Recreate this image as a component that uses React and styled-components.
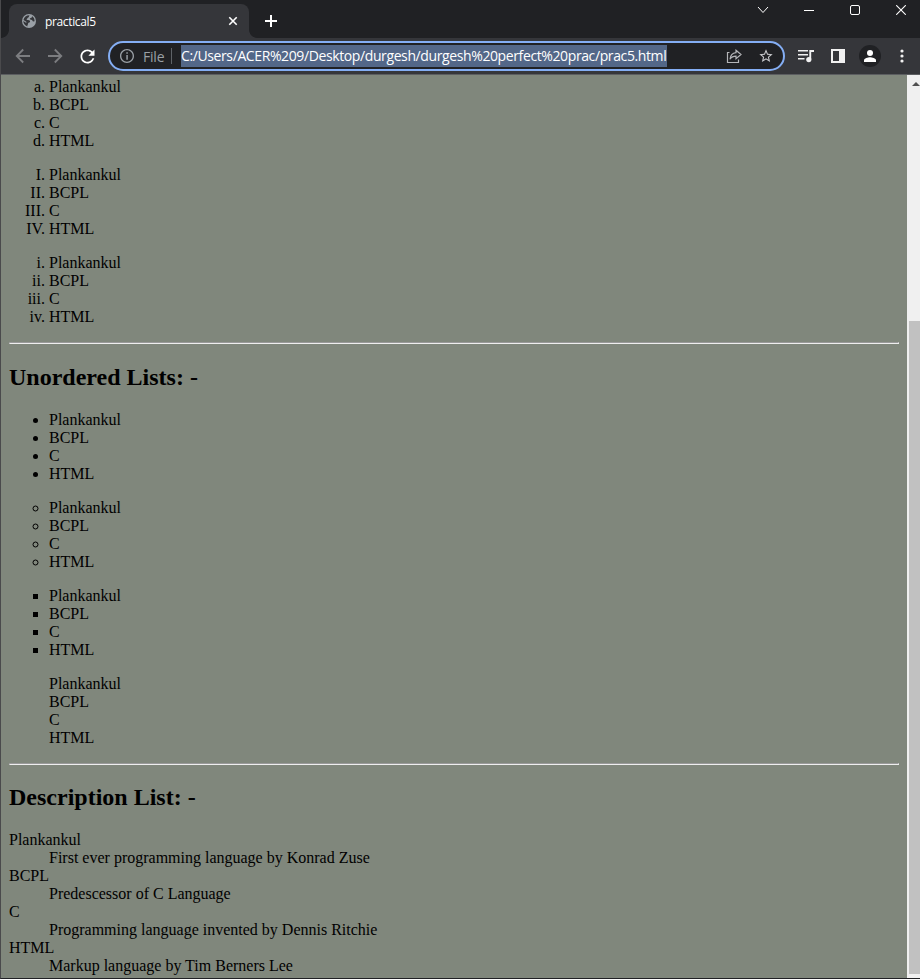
import React from "react";
import styled, { createGlobalStyle } from "styled-components";

const GlobalStyle = createGlobalStyle`
  * { box-sizing: border-box; }
  html, body { margin: 0; padding: 0; overflow: hidden; }
`;

const Window = styled.div`
  width: 920px;
  height: 979px;
  display: flex;
  flex-direction: column;
  background: #202124;
  border-left: 1px solid #4a4a4c;
  border-bottom: 1px solid #202124;
  overflow: hidden;
  font-family: "Open Sans", "Noto Sans", sans-serif;
`;

const TabStrip = styled.div`
  height: 38px;
  flex: none;
  display: flex;
  align-items: flex-start;
  background: #202124;
`;

const TabFoot = styled.div`
  width: 8px;
  height: 8px;
  margin-top: 30px;
  background: radial-gradient(
    circle at ${(p) => (p.$side === "left" ? "0 0" : "100% 0")},
    #202124 7.5px,
    #35363a 8.2px
  );
`;

const Tab = styled.div`
  width: 240px;
  height: 34px;
  margin-top: 4px;
  padding: 0 10px 0 12px;
  display: flex;
  align-items: center;
  background: #35363a;
  border-radius: 8px 8px 0 0;
`;

const TabTitle = styled.span`
  flex: 1;
  margin-left: 8px;
  font-size: 12px;
  letter-spacing: -0.35px;
  color: #fff;
`;

const NewTab = styled.div`
  margin: 13px 0 0 7px;
  display: flex;
`;

const Captions = styled.div`
  margin-left: auto;
  margin-right: -4px;
  display: flex;
`;

const Caption = styled.div`
  width: 46px;
  height: 20px;
  display: flex;
  align-items: center;
  justify-content: center;
`;

const Toolbar = styled.div`
  height: 37px;
  flex: none;
  padding-left: 1px;
  display: flex;
  align-items: center;
  background: #35363a;
  border-bottom: 1px solid #5c5e61;
`;

const NavIcon = styled.div`
  width: 32px;
  display: flex;
  justify-content: center;
  color: ${(p) => (p.$active ? "#fff" : "#7c7d80")};
`;

const Omnibox = styled.div`
  width: 677px;
  height: 30px;
  margin-left: 5px;
  padding: 0 9px 0 9px;
  display: flex;
  align-items: center;
  background: #202124;
  border: 2px solid #84aef4;
  border-radius: 15px;
  color: #9aa0a6;
  font-size: 14px;
  white-space: nowrap;
`;

const Scheme = styled.span`
  margin-left: 8px;
  width: 28px;
  font-size: 14px;
  letter-spacing: -0.2px;
`;

const Divider = styled.span`
  width: 1px;
  height: 16px;
  background: #5f6368;
`;

const Address = styled.span`
  width: 486px;
  height: 22px;
  margin-left: 9px;
  line-height: 21px;
  color: #fff;
  background: #536788;
  letter-spacing: -0.39px;
`;

const OmniActions = styled.div`
  margin-left: auto;
  display: flex;
  gap: 16px;
`;

const ToolIcon = styled.div`
  width: 32px;
  display: flex;
  justify-content: center;
`;

const ToolIcons = styled.div`
  margin-left: ${(p) => p.$gap || 5}px;
  display: flex;
  align-items: center;
`;

const Viewport = styled.div`
  flex: 1;
  min-height: 0;
  display: flex;
`;

const Page = styled.main`
  flex: 1;
  padding: 3px 8px 0;
  background: #80877c;
  color: #000;
  font: 16px/18px "Liberation Serif", "Times New Roman", serif;
  overflow: hidden;
`;

const OrderedList = styled.ol`
  margin: 0 0 16px;
  padding-left: 40px;
  list-style-type: ${(p) => p.$marker};
`;

const BulletList = styled.ul`
  margin: 0 0 16px;
  padding-left: 40px;
  list-style-type: ${(p) => p.$marker};
`;

const Rule = styled.hr`
  height: 2px;
  margin: 0;
  border: 1px solid;
  border-color: #9a9a9a #eee #eee #9a9a9a;
`;

const Heading = styled.h2`
  margin: ${(p) => (p.$tight ? 19 : 20)}px 0 20px;
  font-size: 24px;
  line-height: 27px;
  font-weight: bold;
`;

const Descriptions = styled.dl`
  margin: 0;
`;

const Detail = styled.dd`
  margin: 0 0 0 40px;
`;

const ScrollTrack = styled.div`
  width: 13px;
  padding: 7px 0 4px 2px;
  display: flex;
  flex-direction: column;
  justify-content: space-between;
  background: #f0f0f0;
  overflow: hidden;
`;

const ScrollArrow = styled.div`
  width: 0;
  margin-left: 3px;
  border: 4px solid transparent;
  border-top: 0;
  border-bottom: 4px solid #505050;
`;

const ScrollThumb = styled.div`
  height: 653px;
  background: #c1c1c1;
`;

const languages = ["Plankankul", "BCPL", "C", "HTML"];
const items = languages.map((name) => <li key={name}>{name}</li>);

const descriptions = [
  ["Plankankul", "First ever programming language by Konrad Zuse"],
  ["BCPL", "Predescessor of C Language"],
  ["C", "Programming language invented by Dennis Ritchie"],
  ["HTML", "Markup language by Tim Berners Lee"],
];

const Glyph = ({ size = 16, box = 24, d, fill = "currentColor" }) => (
  <svg width={size} height={size} viewBox={`0 0 ${box} ${box}`} fill={fill}>
    <path d={d} />
  </svg>
);

const Line = ({ w, h = w, d, color = "#fff", sw = 1 }) => (
  <svg width={w} height={h} viewBox={`0 0 ${w} ${h}`} fill="none" stroke={color} strokeWidth={sw}>
    <path d={d} />
  </svg>
);

export default function App() {
  return (
    <Window>
      <GlobalStyle />
      <TabStrip>
        <TabFoot $side="left" />
        <Tab>
          <svg width="16" height="16" viewBox="0 0 16 16">
            <circle cx="8" cy="8" r="7" fill="#9aa0a6" />
            <path
              d="M8.5 2.3C7.8 3.2 8.2 4.2 7.2 4.6C6.1 5 6.4 6 5.5 6.7C6.4 7.3 7.8 6.8 8.7 7.6C9.6 8.5 8.8 9.7 7.6 9.8C6.7 10 7.4 11.3 6.7 11.8C6.3 12.2 6.4 13.2 6.4 13.4C3.8 12.8 2.3 10.5 2.3 8.1L5.3 10V8.8L2.5 6.9C3.1 4.2 5.2 2.3 8.5 2.3ZM11.2 3.3L10.3 5.1L8.8 5.2L9.2 6.6L11 7L12 8.4L13.6 8.3C13.6 6.1 12.8 4.3 11.2 3.3Z"
              fill="#35363a"
            />
          </svg>
          <TabTitle>practical5</TabTitle>
          <Line w={12} d="M2.3 2.3L9.7 9.7M9.7 2.3L2.3 9.7" sw={1.6} />
        </Tab>
        <TabFoot $side="right" />
        <NewTab>
          <Line w={16} d="M7 2V14M1 8H13" sw={2} />
        </NewTab>
        <Captions>
          <Caption><Line w={12} d="M1 3L6 8.5L11 3" /></Caption>
          <Caption><Line w={10} d="M0 5.5H10" /></Caption>
          <Caption>
            <svg width="10" height="10" viewBox="0 0 10 10" fill="none" stroke="#fff">
              <rect x=".5" y=".5" width="9" height="9" rx="1.5" />
            </svg>
          </Caption>
          <Caption><Line w={10} d="M.2 .2L9.8 9.8M9.8 .2L.2 9.8" sw={1.1} /></Caption>
        </Captions>
      </TabStrip>
      <Toolbar>
        <ToolIcons>
          <NavIcon><Line w={16} color="currentColor" sw={1.8} d="M15 8H2M8.2 1.5L1.7 8L8.2 14.5" /></NavIcon>
          <NavIcon><Line w={16} color="currentColor" sw={1.8} d="M1 8H14M7.8 1.5L14.3 8L7.8 14.5" /></NavIcon>
          <NavIcon $active>
            <Glyph size={21} d="M17.65 6.35C16.2 4.9 14.21 4 12 4c-4.42 0-7.99 3.58-7.99 8s3.57 8 7.99 8c3.73 0 6.84-2.55 7.73-6h-2.08c-.82 2.33-3.04 4-5.65 4-3.31 0-6-2.69-6-6s2.69-6 6-6c1.66 0 3.14.69 4.22 1.78L13 11h7V4l-2.35 2.35z" />
          </NavIcon>
        </ToolIcons>
        <Omnibox>
          <Glyph d="M11 6.5h2.2v2.2H11zm0 4h2.2v7H11zm1-9C6.2 1.5 1.5 6.2 1.5 12S6.2 22.500 12 22.500 22.500 17.800 22.500 12 17.800 1.500 12 1.500zm0 19c-4.700 0-8.500-3.800-8.500-8.500S7.300 3.500 12 3.500s8.500 3.800 8.500 8.500-3.800 8.500-8.500 8.500z" />
          <Scheme>File</Scheme>
          <Divider />
          <Address>C:/Users/ACER%209/Desktop/durgesh/durgesh%20perfect%20prac/prac5.html</Address>
          <OmniActions>
            <Line
              w={16}
              color="#b4b5b8"
              sw={1.2}
              d="M3.5 4.5H1.5V14.5H12.5V11.5M10 2.2L15 6.5L10 10.8V8.2C7.3 8.2 5.3 9.2 4 11.3C4.3 7.8 6.4 5 10 4.6Z"
            />
            <Glyph
              fill="#c8c9cc"
              d="M22 9.24l-7.19-.62L12 2 9.19 8.63 2 9.24l5.46 4.73L5.82 21 12 17.27 18.18 21l-1.63-7.03L22 9.24zM12 15.4l-3.76 2.27 1-4.28-3.32-2.88 4.38-.38L12 6.1l1.71 4.04 4.38.38-3.32 2.88 1 4.28L12 15.4z"
            />
          </OmniActions>
        </Omnibox>
        <ToolIcons>
          <ToolIcon>
            <svg width="16" height="14" viewBox="0 0 16 14" fill="#f1f1f1">
              <path d="M0 1h10v1.6H0zM0 5h10v1.6H0zM0 9h6.5v1.6H0zM11.3 1H16v2h-2.8v7.3h-1.9z" />
              <circle cx="10.8" cy="10.6" r="2.6" />
            </svg>
          </ToolIcon>
          <ToolIcon>
            <svg width="14" height="14" viewBox="0 0 14 14" fill="#f1f1f1">
              <path fillRule="evenodd" d="M0 0H14V14H0ZM2 2V12H8V2Z" />
            </svg>
          </ToolIcon>
          <ToolIcon>
            <svg width="22" height="22" viewBox="0 0 22 22" fill="#fff">
              <circle cx="11" cy="11" r="11" fill="#202124" />
              <circle cx="11" cy="8" r="3" />
              <path d="M5 17V15.3C5 13.2 9 12.2 11 12.2S17 13.2 17 15.3V17Z" />
            </svg>
          </ToolIcon>
          <ToolIcon>
            <svg width="4" height="14" viewBox="0 0 4 14" fill="#f1f1f1">
              <circle cx="2" cy="2" r="1.6" />
              <circle cx="2" cy="7" r="1.6" />
              <circle cx="2" cy="12" r="1.6" />
            </svg>
          </ToolIcon>
        </ToolIcons>
      </Toolbar>
      <Viewport>
        <Page>
          <OrderedList $marker="lower-alpha">{items}</OrderedList>
          <OrderedList $marker="upper-roman">{items}</OrderedList>
          <OrderedList $marker="lower-roman">{items}</OrderedList>
          <Rule />
          <Heading>Unordered Lists: -</Heading>
          <BulletList $marker="disc">{items}</BulletList>
          <BulletList $marker="circle">{items}</BulletList>
          <BulletList $marker="square">{items}</BulletList>
          <BulletList $marker="none">{items}</BulletList>
          <Rule />
          <Heading $tight>Description List: -</Heading>
          <Descriptions>
            {descriptions.map(([term, detail]) => (
              <React.Fragment key={term}>
                <dt>{term}</dt>
                <Detail>{detail}</Detail>
              </React.Fragment>
            ))}
          </Descriptions>
        </Page>
        <ScrollTrack>
          <ScrollArrow />
          <ScrollThumb />
        </ScrollTrack>
      </Viewport>
    </Window>
  );
}
